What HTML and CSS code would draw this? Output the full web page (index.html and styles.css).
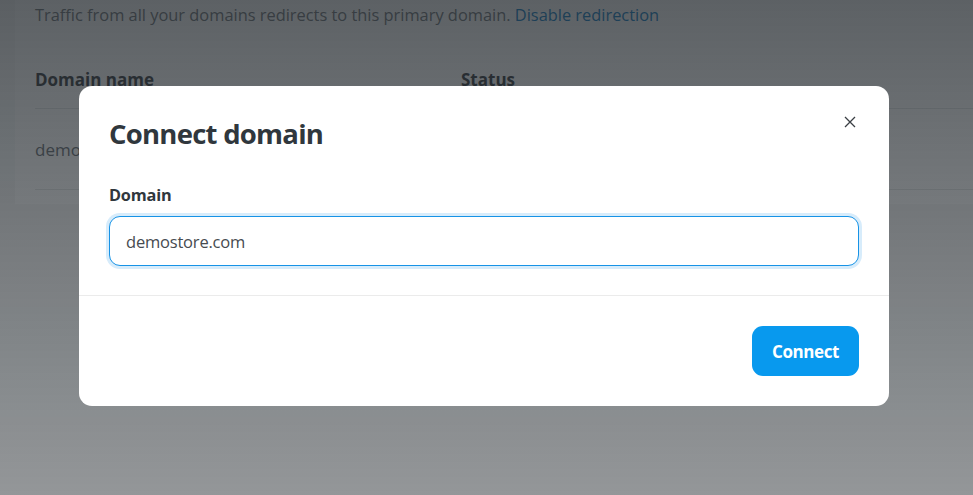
FILE: index.html
```html
<!DOCTYPE html>
<html lang="en">
<head>
<meta charset="utf-8">
<title>Connect domain</title>
<link rel="stylesheet" href="styles.css">
</head>
<body>
<div class="page">
  <section class="card">
    <p class="intro">Traffic from all your domains redirects to this primary domain. <a class="link" href="#">Disable redirection</a></p>
    <div class="table">
      <div class="row head">
        <div class="col-name">Domain name</div>
        <div class="col-status">Status</div>
      </div>
      <div class="row">
        <div class="col-name">demo</div>
        <div class="col-status"></div>
      </div>
    </div>
  </section>
</div>

<div class="overlay">
  <div class="modal" role="dialog" aria-labelledby="modal-title">
    <div class="modal-body">
      <div class="modal-header">
        <h2 id="modal-title" class="modal-title">Connect domain</h2>
        <button class="close" aria-label="Close">
          <svg width="12" height="12" viewBox="0 0 12 12" aria-hidden="true"><path d="M1 1 L11 11 M11 1 L1 11" stroke="#3a3f44" stroke-width="1.3" fill="none"/></svg>
        </button>
      </div>
      <label class="field-label" for="domain">Domain</label>
      <div class="input-wrap">
        <input id="domain" class="input" type="text" value="demostore.com">
      </div>
    </div>
    <div class="modal-footer">
      <button class="btn-primary">Connect</button>
    </div>
  </div>
</div>
</body>
</html>
```
FILE: styles.css
```css
* { box-sizing: border-box; }

html, body {
  margin: 0;
  height: 100%;
}

body {
  font-family: "Open Sans", "Noto Sans", sans-serif;
  background: #f7f8f8;
  color: #2f3337;
  overflow: hidden;
}

.page {
  padding: 0 0 0 15px;
}

.card {
  background: #fff;
  padding: 0 0 14px 20px;
  margin-top: -8px;
}

.intro {
  margin: 0;
  padding-top: 11px;
  font-size: 16.4px;
  line-height: 24px;
  color: #767b80;
}

.link {
  color: #1c84c6;
  text-decoration: none;
}

.table {
  margin-top: 40px;
}

.row {
  display: flex;
  align-items: center;
  height: 81px;
  border-bottom: 1px solid #e4e6e8;
  font-size: 17px;
  color: #6e7378;
}

.row.head {
  height: 42px;
  align-items: flex-start;
  font-weight: 700;
  color: #3f4448;
  padding-top: 1px;
}

.col-name { width: 426px; }

.overlay {
  position: fixed;
  inset: 0;
  background: linear-gradient(to bottom, rgba(30, 36, 41, 0.72), rgba(30, 36, 41, 0.46));
  display: flex;
  justify-content: flex-start;
  padding: 86px 0 0 79px;
}

.modal {
  width: 810px;
  height: 320px;
  background: #fff;
  border-radius: 13px;
  display: flex;
  flex-direction: column;
}

.modal-body {
  padding: 28px 30px 29px;
  border-bottom: 1px solid #ebebeb;
}

.modal-header {
  display: flex;
  justify-content: space-between;
  align-items: flex-start;
}

.modal-title {
  margin: 0;
  font-size: 27.5px;
  line-height: 40px;
  font-weight: 700;
  letter-spacing: -0.75px;
  color: #30373d;
}

.close {
  border: 0;
  background: none;
  padding: 0;
  margin: 2px 3px 0 0;
  width: 12px;
  height: 12px;
  display: flex;
  cursor: pointer;
}

.field-label {
  display: block;
  margin-top: 30px;
  font-size: 16.3px;
  line-height: 22px;
  font-weight: 700;
  color: #30373d;
  letter-spacing: -0.2px;
}

.input-wrap {
  margin-top: 10px;
}

.input {
  display: block;
  width: 100%;
  height: 50px;
  border: 1px solid #1793e6;
  border-radius: 11px;
  box-shadow: 0 0 0 3px #d7ecfb;
  padding: 0 16px;
  font-family: inherit;
  font-size: 16.5px;
  color: #464b50;
  letter-spacing: -0.2px;
  outline: none;
}

.modal-footer {
  flex: 1;
  display: flex;
  justify-content: flex-end;
  align-items: center;
  padding: 0 30px;
}

.btn-primary {
  width: 107px;
  height: 50px;
  border: 0;
  border-radius: 11px;
  background: #0899ee;
  color: #fff;
  font-family: inherit;
  font-size: 17px;
  font-weight: 700;
  letter-spacing: -0.4px;
  cursor: pointer;
}
```
